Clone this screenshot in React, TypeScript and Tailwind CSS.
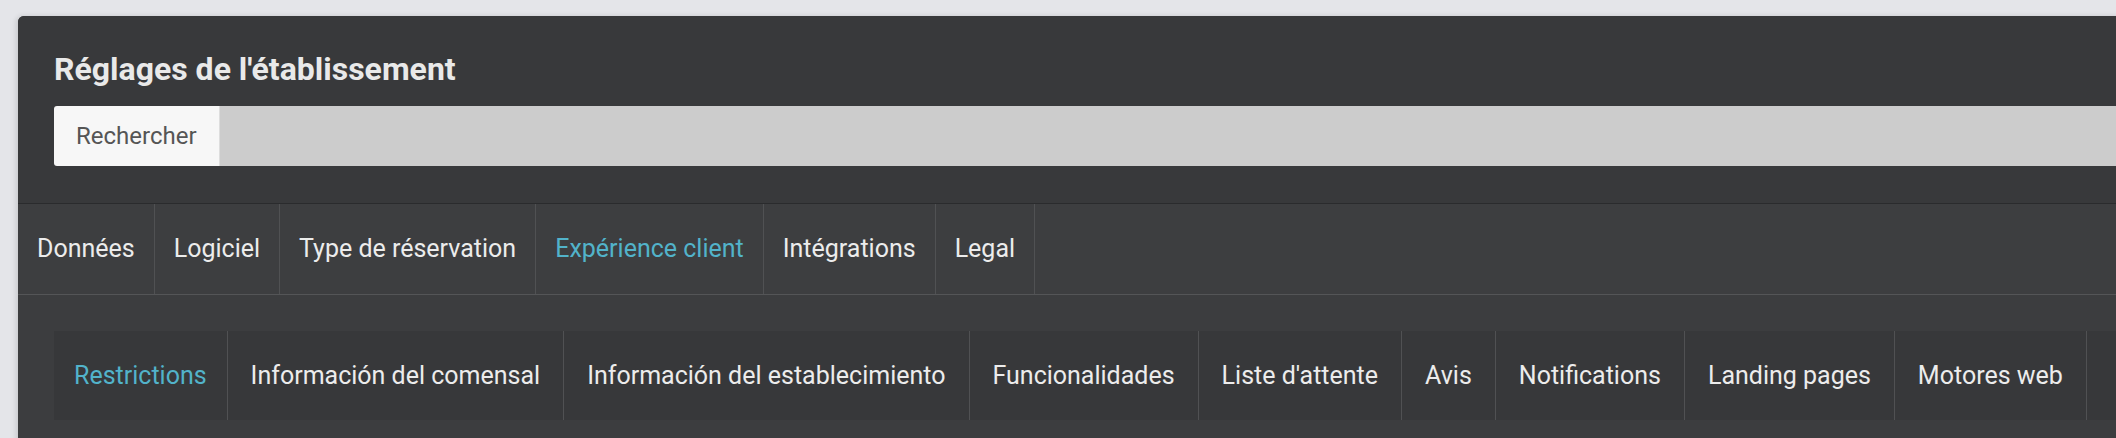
import React from "react";

const topTabs = [
  { label: "Données" },
  { label: "Logiciel" },
  { label: "Type de réservation" },
  { label: "Expérience client", active: true },
  { label: "Intégrations" },
  { label: "Legal" },
];

const subTabs = [
  { label: "Restrictions", active: true },
  { label: "Información del comensal" },
  { label: "Información del establecimiento" },
  { label: "Funcionalidades" },
  { label: "Liste d'attente" },
  { label: "Avis" },
  { label: "Notifications" },
  { label: "Landing pages" },
  { label: "Motores web" },
];

export default function App() {
  return (
    <div
      className="w-[2116px] h-[438px] overflow-hidden bg-[#e4e5e9] pt-[16px] pl-[18px]"
      style={{ fontFamily: "Roboto, 'Noto Sans', sans-serif" }}
    >
      <div className="w-[2200px] h-[500px] rounded-tl-[6px] bg-[#3c3d3f] shadow-[-2px_0_5px_rgba(0,0,0,0.12)] overflow-hidden">
        {/* Header */}
        <div className="bg-[#38393b] pt-[34px] pl-[36px] pb-[37px] border-b-[1px] border-[#2a2b2d]">
          <h1 className="text-[32px] leading-[38px] font-bold text-[#e9e9e9] whitespace-nowrap">
            Réglages de l'établissement
          </h1>
          <div className="mt-[18px] flex h-[60px] rounded-l-[3px] overflow-hidden">
            <div className="flex items-center px-[22px] bg-[#f7f7f7] text-[#555555] text-[24px] border-r border-[#dddddd] whitespace-nowrap">
              Rechercher
            </div>
            <div className="flex-1 bg-[#cccccc]" />
          </div>
        </div>

        {/* Top tabs */}
        <div className="flex h-[91px] bg-[#3d3e40] border-b border-[#545557]">
          {topTabs.map((t) => (
            <div
              key={t.label}
              className={`flex items-center px-[19px] text-[25px] whitespace-nowrap border-r border-[#505153] ${
                t.active ? "text-[#52b3ca]" : "text-[#ececec]"
              }`}
            >
              {t.label}
            </div>
          ))}
        </div>

        {/* Content */}
        <div className="pt-[36px] pl-[36px]">
          <div className="flex h-[89px] bg-[#37383a]">
            {subTabs.map((t, i) => (
              <div
                key={t.label}
                className={`flex items-center text-[25px] whitespace-nowrap border-r border-[#505153] ${
                  i === 0 ? "px-[20px]" : "px-[23px]"
                } ${t.active ? "text-[#52b3ca]" : "text-[#ececec]"}`}
              >
                {t.label}
              </div>
            ))}
            <div className="flex-1" />
          </div>
        </div>
      </div>
    </div>
  );
}
